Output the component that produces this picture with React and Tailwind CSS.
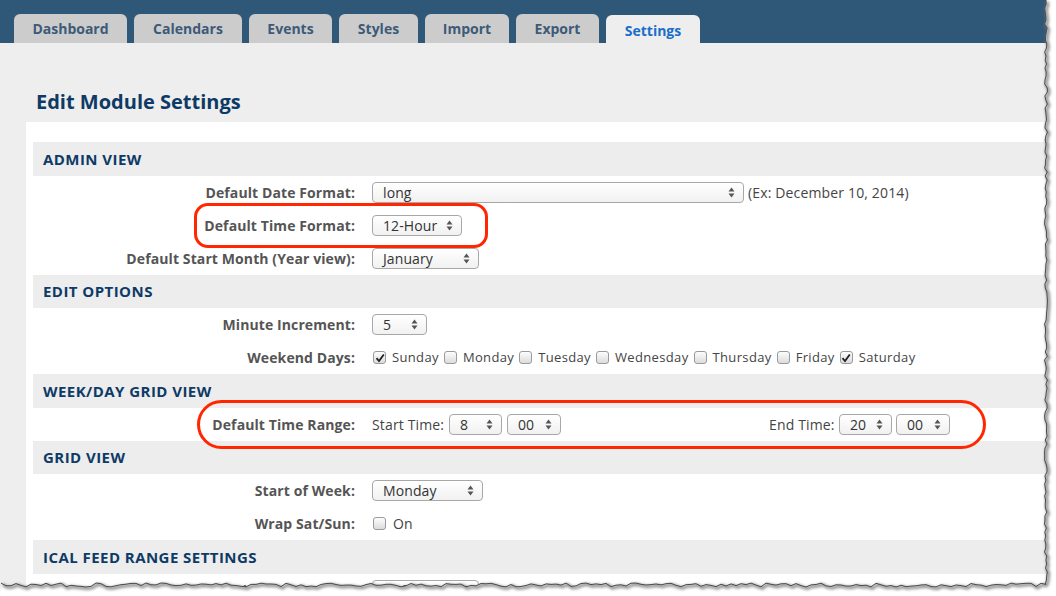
import React from 'react';

const tabs = [
  { label: 'Dashboard', w: 113 },
  { label: 'Calendars', w: 108 },
  { label: 'Events', w: 83 },
  { label: 'Styles', w: 79 },
  { label: 'Import', w: 84 },
  { label: 'Export', w: 83 },
  { label: 'Settings', w: 94, active: true },
];

const font = { fontFamily: '"Open Sans", "Liberation Sans", sans-serif' };

const Arrows = () => (
  <svg width="7" height="11" viewBox="0 0 7 11" className="shrink-0">
    <path d="M3.5 0.5 L6.5 4.5 H0.5 Z" fill="#555" />
    <path d="M3.5 10.5 L6.5 6.5 H0.5 Z" fill="#555" />
  </svg>
);

const Select = ({ value, w }) => (
  <div
    className="flex h-[21px] shrink-0 items-center justify-between rounded-[4px] border border-[#a8a8a8] bg-gradient-to-b from-white to-[#f1f1f1] pl-[10px] pr-[8px] text-[14px] tracking-[0.1px] text-[#333]"
    style={{ width: w }}
  >
    <span>{value}</span>
    <Arrows />
  </div>
);

const Check = ({ checked }) => (
  <div className="flex h-[13px] w-[13px] shrink-0 items-center justify-center rounded-[3px] border border-[#9a9a9a] bg-gradient-to-b from-[#fdfdfd] to-[#dcdcdc]">
    {checked && (
      <svg width="10" height="10" viewBox="0 0 10 10">
        <path d="M1.5 5.2 L4 8 L8.8 1.5" fill="none" stroke="#222" strokeWidth="1.8" />
      </svg>
    )}
  </div>
);

const Section = ({ title }) => (
  <div className="flex h-[33.5px] items-center bg-[#ededed] pl-[10px] text-[15px] font-bold tracking-[0.45px] text-[#0e3a66]">
    {title}
  </div>
);

const Row = ({ label, children }) => (
  <div className="flex h-[33px] items-center">
    <div className="w-[322px] shrink-0 whitespace-nowrap text-right text-[14px] font-bold tracking-[0.1px] text-[#555]">
      {label}
    </div>
    <div className="ml-[17px] flex items-center whitespace-nowrap text-[14px] tracking-[0.15px] text-[#444]">
      {children}
    </div>
  </div>
);

const days = [
  ['Sunday', true],
  ['Monday', false],
  ['Tuesday', false],
  ['Wednesday', false],
  ['Thursday', false],
  ['Friday', false],
  ['Saturday', true],
];

// jagged torn edge along the right and bottom
const tornPath = () => {
  let seed = 7;
  const rnd = () => {
    seed = (seed * 9301 + 49297) % 233280;
    return seed / 233280;
  };
  const pts = [];
  for (let y = 0; y <= 584; y += 4) pts.push([1046 + (rnd() - 0.5) * 3, y]);
  for (let x = 1046; x >= 0; x -= 5) pts.push([x, 585 + (rnd() - 0.5) * 4]);
  return pts.map((p, i) => `${i ? 'L' : 'M'}${p[0].toFixed(1)} ${p[1].toFixed(1)}`).join(' ');
};

export default function App() {
  const edge = tornPath();
  return (
    <div className="relative h-[596px] w-[1056px] overflow-hidden bg-white" style={font}>
      <div className="flex h-[596px] w-[1048px] flex-col bg-[#eeeeee]">
        {/* Tab bar */}
        <div className="flex h-[43px] shrink-0 items-end gap-[7px] bg-[#2f5778] pl-[14px]">
          {tabs.map((t) => (
            <div
              key={t.label}
              className={`flex items-center justify-center rounded-t-[6px] text-[14px] font-bold ${
                t.active ? 'h-[28px] bg-[#eeeeee] pt-[2px] text-[#1a6ec9]' : 'h-[29px] bg-[#cccccc] text-[#3d5a78]'
              }`}
              style={{ width: t.w }}
            >
              {t.label}
            </div>
          ))}
        </div>

        <h1 className="ml-[36px] mt-[45px] h-[28px] text-[20px] font-bold leading-[28px] text-[#0e3a66]">
          Edit Module Settings
        </h1>

        <div className="ml-[26px] mt-[6px] flex-1 bg-white pl-[7px] pt-[20px]">
          <Section title="ADMIN VIEW" />
          <Row label="Default Date Format:">
            <Select value="long" w={372} />
            <span className="ml-[4px]">(Ex: December 10, 2014)</span>
          </Row>
          <Row label="Default Time Format:">
            <Select value="12-Hour" w={90} />
          </Row>
          <Row label="Default Start Month (Year view):">
            <Select value="January" w={107} />
          </Row>

          <Section title="EDIT OPTIONS" />
          <Row label="Minute Increment:">
            <Select value="5" w={55} />
          </Row>
          <Row label="Weekend Days:">
            <div className="flex items-center pl-[1px] text-[13px] tracking-[0.35px]">
              {days.map(([d, c]) => (
                <div key={d} className="mr-[5px] flex items-center gap-[6px]">
                  <Check checked={c} />
                  <span>{d}</span>
                </div>
              ))}
            </div>
          </Row>

          <Section title="WEEK/DAY GRID VIEW" />
          <Row label="Default Time Range:">
            <span className="w-[77px] shrink-0">Start Time:</span>
            <Select value="8" w={53} />
            <div className="ml-[5px]">
              <Select value="00" w={54} />
            </div>
            <span className="ml-[208px] w-[70px] shrink-0">End Time:</span>
            <Select value="20" w={53} />
            <div className="ml-[4px]">
              <Select value="00" w={54} />
            </div>
          </Row>

          <Section title="GRID VIEW" />
          <Row label="Start of Week:">
            <Select value="Monday" w={111} />
          </Row>
          <Row label="Wrap Sat/Sun:">
            <div className="flex items-center gap-[7px] pl-[1px]">
              <Check checked={false} />
              <span>On</span>
            </div>
          </Row>

          <Section title="ICAL FEED RANGE SETTINGS" />
          <Row label="Default Range Export:">
            <Select value="Default" w={107} />
          </Row>
        </div>
      </div>

      {/* red annotation marks */}
      <div className="absolute left-[194px] top-[203px] h-[45px] w-[294px] rounded-[14px] border-[3px] border-[#ff2600]" />
      <div className="absolute left-[197px] top-[400px] h-[49px] w-[789px] rounded-[26px] border-[3px] border-[#ff2600]" />

      {/* torn paper edge */}
      <svg className="absolute left-0 top-0" width="1056" height="596" viewBox="0 0 1056 596">
        <defs>
          <filter id="sh" x="-5%" y="-5%" width="110%" height="110%">
            <feGaussianBlur stdDeviation="1.6" />
          </filter>
        </defs>
        <path d={`${edge} L0 596 L1056 596 L1056 0 Z`} fill="#ffffff" />
        <path d={edge} fill="none" stroke="#777" strokeWidth="2.5" filter="url(#sh)" transform="translate(1.5 1.5)" />
        <path d={edge} fill="none" stroke="#4a4a4a" strokeWidth="1" />
      </svg>
    </div>
  );
}
